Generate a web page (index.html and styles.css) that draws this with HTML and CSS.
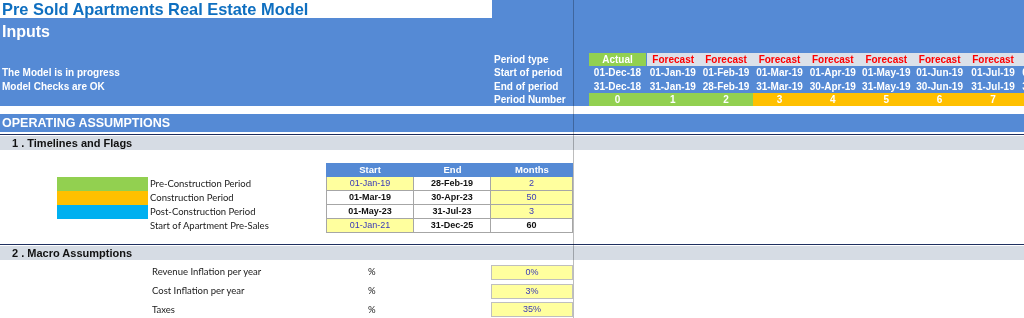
FILE: index.html
```html
<!DOCTYPE html>
<html>
<head>
<meta charset="utf-8">
<link rel="stylesheet" href="styles.css">
</head>
<body>
<div class="sheet">
  <header class="hdr">
    <div class="title">Pre Sold Apartments Real Estate Model</div>
    <div class="inputs">Inputs</div>
    <div class="periods">
      <div class="prow">
        <span class="lt"></span><span>Period type</span><span></span>
        <span class="c actual">Actual</span>
        <span class="c fc fc1">Forecast</span><span class="c fc">Forecast</span><span class="c fc">Forecast</span><span class="c fc">Forecast</span>
        <span class="c fc">Forecast</span><span class="c fc">Forecast</span><span class="c fc">Forecast</span><span class="c fc">Forecast</span>
      </div>
      <div class="prow">
        <span class="lt">The Model is in progress</span><span>Start of period</span><span></span>
        <span class="c">01-Dec-18</span><span class="c">01-Jan-19</span><span class="c">01-Feb-19</span><span class="c">01-Mar-19</span>
        <span class="c">01-Apr-19</span><span class="c">01-May-19</span><span class="c">01-Jun-19</span><span class="c">01-Jul-19</span><span class="c">01-Aug-19</span>
      </div>
      <div class="prow">
        <span class="lt">Model Checks are OK</span><span>End of period</span><span></span>
        <span class="c">31-Dec-18</span><span class="c">31-Jan-19</span><span class="c">28-Feb-19</span><span class="c">31-Mar-19</span>
        <span class="c">30-Apr-19</span><span class="c">31-May-19</span><span class="c">30-Jun-19</span><span class="c">31-Jul-19</span><span class="c">31-Aug-19</span>
      </div>
      <div class="prow">
        <span class="lt"></span><span>Period Number</span><span></span>
        <span class="c pre">0</span><span class="c pre">1</span><span class="c pre">2</span><span class="c con">3</span>
        <span class="c con">4</span><span class="c con">5</span><span class="c con">6</span><span class="c con">7</span><span class="c con">8</span>
      </div>
    </div>
  </header>

  <div class="band">OPERATING ASSUMPTIONS</div>

  <div class="sec"><div class="sec-title">1 . Timelines and Flags</div></div>

  <div class="flags">
    <span></span><span></span><span></span>
    <span class="th">Start</span><span class="th">End</span><span class="th">Months</span>

    <span></span><span class="sw sw-green"></span><span class="lab">Pre-Construction Period</span>
    <span class="td first in">01-Jan-19</span><span class="td calc">28-Feb-19</span><span class="td in">2</span>

    <span></span><span class="sw sw-orange"></span><span class="lab">Construction Period</span>
    <span class="td first calc">01-Mar-19</span><span class="td calc">30-Apr-23</span><span class="td in">50</span>

    <span></span><span class="sw sw-blue"></span><span class="lab">Post-Construction Period</span>
    <span class="td first calc">01-May-23</span><span class="td calc">31-Jul-23</span><span class="td in">3</span>

    <span></span><span></span><span class="lab">Start of Apartment Pre-Sales</span>
    <span class="td first in">01-Jan-21</span><span class="td calc">31-Dec-25</span><span class="td calc">60</span>
  </div>

  <div class="sec sec-macro"><div class="sec-title">2 . Macro Assumptions</div></div>

  <div class="macro">
    <span></span><span class="lab">Revenue Inflation per year</span><span class="lab">%</span><span class="mbox">0%</span>
    <span></span><span class="lab">Cost Inflation per year</span><span class="lab">%</span><span class="mbox">3%</span>
    <span></span><span class="lab">Taxes</span><span class="lab">%</span><span class="mbox">35%</span>
  </div>

  <div class="freeze"></div>
</div>
</body>
</html>
```

FILE: styles.css
```css
html, body {
  margin: 0;
  padding: 0;
  background: #ffffff;
}

.sheet {
  position: relative;
  width: 1024px;
  height: 318px;
  overflow: hidden;
  font-family: "Liberation Sans", Arial, sans-serif;
  color: #111111;
}

.hdr {
  background: #558ad5;
  height: 106px;
  display: flex;
  flex-direction: column;
}

.title {
  width: 490px;
  height: 18px;
  padding-left: 2px;
  background: #ffffff;
  color: #0f6fc0;
  font-weight: bold;
  font-size: 16.4px;
  line-height: 19px;
  white-space: nowrap;
}

.inputs {
  color: #ffffff;
  font-weight: bold;
  font-size: 16px;
  line-height: 20px;
  padding-left: 2px;
  margin-top: 4px;
}

.periods {
  margin-top: auto;
}

.prow {
  display: grid;
  grid-template-columns: 494px 79px 16px 57px repeat(8, 53.4px);
  height: 13.25px;
  color: #ffffff;
  font-weight: bold;
  font-size: 10px;
  line-height: 13.25px;
  white-space: nowrap;
}

.prow > span {
  overflow: hidden;
}

.lt {
  padding-left: 2px;
}

.c {
  text-align: center;
}

.actual {
  background: #92d050;
}

.fc {
  background: #dce1e9;
  color: #ff0000;
}

.fc1 {
  margin-left: 1px;
}

.pre {
  background: #92d050;
}

.con {
  background: #ffc000;
}

.band {
  margin-top: 8px;
  height: 18px;
  background: #558ad5;
  color: #ffffff;
  font-weight: bold;
  font-size: 12.5px;
  line-height: 18px;
  padding-left: 2px;
}

.sec {
  margin-top: 2px;
  border-top: 1px solid #1f3060;
  padding-top: 1px;
}

.sec-title {
  background: #d6dce4;
  height: 14px;
  line-height: 14px;
  font-size: 11px;
  font-weight: bold;
  padding-left: 12px;
  color: #111111;
}

.sec-macro {
  margin-top: 11px;
}

.flags {
  display: grid;
  grid-template-columns: 57px 91px 178px 88px 77px 82px;
  grid-auto-rows: 14px;
  margin-top: 13px;
}

.sw-green { background: #92d050; }
.sw-orange { background: #ffc000; }
.sw-blue { background: #00b0f0; }

.lab {
  font-family: Lato, "Open Sans", sans-serif;
  font-size: 9.5px;
  line-height: 14px;
  color: #1a1a1a;
  padding-left: 2px;
  white-space: nowrap;
}

.th {
  background: #558ad5;
  color: #ffffff;
  font-weight: bold;
  font-size: 9.5px;
  line-height: 14px;
  text-align: center;
}

.td {
  box-sizing: border-box;
  text-align: center;
  font-size: 9px;
  line-height: 13px;
  border-right: 1px solid #a6a6a6;
  border-bottom: 1px solid #a6a6a6;
}

.td.first {
  border-left: 1px solid #a6a6a6;
}

.in {
  background: #ffff9e;
  color: #3a3ab8;
}

.calc {
  font-weight: bold;
  color: #111111;
}

.macro {
  display: grid;
  grid-template-columns: 150px 216px 125px 82px;
  grid-auto-rows: 18.7px;
  align-items: center;
  margin-top: 3px;
}

.mbox {
  box-sizing: border-box;
  height: 15px;
  background: #ffff9e;
  border: 1px solid #bfbfbf;
  color: #3a3ab8;
  text-align: center;
  font-size: 9px;
  line-height: 13px;
}

.freeze {
  position: absolute;
  left: 573px;
  top: 0;
  bottom: 0;
  width: 1px;
  background: #bdbdbd;
  mix-blend-mode: multiply;
}
```
